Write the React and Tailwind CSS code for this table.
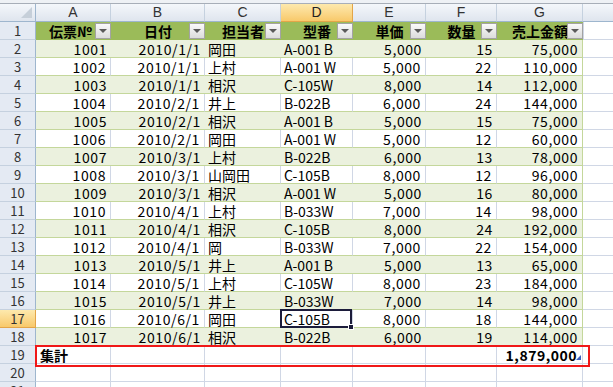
import React from "react";

const cols = [
  { key: "A", w: "w-[75px]" },
  { key: "B", w: "w-[94px]" },
  { key: "C", w: "w-[76px]" },
  { key: "D", w: "w-[72px]" },
  { key: "E", w: "w-[73px]" },
  { key: "F", w: "w-[71px]" },
  { key: "G", w: "w-[86px]" },
];

const heads = ["伝票№", "日付", "担当者", "型番", "単価", "数量", "売上金額"];

const rows = [
  ["1001", "2010/1/1", "岡田", "A-001 B", "5,000", "15", "75,000"],
  ["1002", "2010/1/1", "上村", "A-001 W", "5,000", "22", "110,000"],
  ["1003", "2010/1/1", "相沢", "C-105W", "8,000", "14", "112,000"],
  ["1004", "2010/2/1", "井上", "B-022B", "6,000", "24", "144,000"],
  ["1005", "2010/2/1", "相沢", "A-001 B", "5,000", "15", "75,000"],
  ["1006", "2010/2/1", "岡田", "A-001 W", "5,000", "12", "60,000"],
  ["1007", "2010/3/1", "上村", "B-022B", "6,000", "13", "78,000"],
  ["1008", "2010/3/1", "山岡田", "C-105B", "8,000", "12", "96,000"],
  ["1009", "2010/3/1", "相沢", "A-001 W", "5,000", "16", "80,000"],
  ["1010", "2010/4/1", "上村", "B-033W", "7,000", "14", "98,000"],
  ["1011", "2010/4/1", "相沢", "C-105B", "8,000", "24", "192,000"],
  ["1012", "2010/4/1", "岡", "B-033W", "7,000", "22", "154,000"],
  ["1013", "2010/5/1", "井上", "A-001 B", "5,000", "13", "65,000"],
  ["1014", "2010/5/1", "上村", "C-105W", "8,000", "23", "184,000"],
  ["1015", "2010/5/1", "井上", "B-033W", "7,000", "14", "98,000"],
  ["1016", "2010/6/1", "岡田", "C-105B", "8,000", "18", "144,000"],
  ["1017", "2010/6/1", "相沢", "B-022B", "6,000", "19", "114,000"],
];

const leftCols = [2, 3];

function RowHead({ n, active }) {
  return (
    <div
      className={
        "w-[36px] shrink-0 h-full flex items-center justify-center border-r border-b text-[13px] " +
        (active
          ? "bg-gradient-to-b from-[#fde9ad] to-[#f8c96a] border-r-[#e3a548] border-b-[#e3a548] text-[#333]"
          : "bg-[#e4eaf3] border-r-[#9eb6ce] border-b-[#c5d1df] text-[#333]")
      }
    >
      {n}
    </div>
  );
}

function FilterBtn() {
  return (
    <div className="absolute right-0 top-[1px] w-[16px] h-[16px] border border-[#a3a3a3] bg-gradient-to-b from-[#fafafa] to-[#dcdcdc] flex items-center justify-center">
      <div className="w-0 h-0 border-l-[4px] border-r-[4px] border-t-[4px] border-l-transparent border-r-transparent border-t-[#5a5a5a]" />
    </div>
  );
}

export default function App() {
  return (
    <div
      className="w-[613px] h-[387px] overflow-hidden bg-white relative"
      style={{ fontFamily: '"Noto Sans CJK JP", "Liberation Sans", sans-serif' }}
    >
      <div className="h-[4px] bg-[#eef1f5] border-b border-[#a7aeb8]" />

      {/* column letters */}
      <div className="flex h-[18px]" style={{ fontFamily: '"Liberation Sans", sans-serif' }}>
        <div className="w-[36px] shrink-0 bg-gradient-to-b from-[#f4f7fb] to-[#dfe5ee] border-r border-b border-[#9eb6ce] relative">
          <div className="absolute right-[3px] bottom-[3px] w-0 h-0 border-l-[11px] border-b-[11px] border-l-transparent border-b-[#c6cfd9]" />
        </div>
        {cols.map((c) => (
          <div
            key={c.key}
            className={
              c.w +
              " shrink-0 flex items-center justify-center border-r border-b text-[14px] " +
              (c.key === "D"
                ? "bg-gradient-to-b from-[#fde9ad] to-[#f8c96a] border-[#e3a548] text-[#222]"
                : "bg-gradient-to-b from-[#f4f7fb] to-[#dfe5ee] border-r-[#c5d1df] border-b-[#9eb6ce] text-[#333]")
            }
          >
            {c.key}
          </div>
        ))}
        <div className="flex-1 bg-gradient-to-b from-[#f4f7fb] to-[#dfe5ee] border-b border-[#9eb6ce]" />
      </div>

      {/* row 1: table header */}
      <div className="flex h-[18px]">
        <RowHead n={1} />
        {cols.map((c, i) => (
          <div
            key={c.key}
            className={c.w + " shrink-0 relative bg-[#9bbb59] border-b border-[#9bbb59] flex items-center justify-center text-[14px] font-bold text-black leading-[18px] overflow-hidden whitespace-nowrap"}
          >
            <span className={i === 0 ? "pr-[6px]" : ""}>{heads[i]}</span>
            <FilterBtn />
          </div>
        ))}
        <div className="flex-1 border-b border-l border-[#d0d7e5]" />
      </div>

      {/* data rows */}
      {rows.map((r, ri) => {
        const band = ri % 2 === 0;
        const n = ri + 2;
        return (
          <div key={ri} className="flex h-[18px]">
            <RowHead n={n} active={n === 17} />
            {cols.map((c, ci) => (
              <div
                key={c.key}
                className={
                  c.w +
                  " shrink-0 relative border-b border-b-[#c4d79b] flex items-center text-[14px] leading-[18px] text-black whitespace-nowrap " +
                  (leftCols.includes(ci) ? "justify-start pl-[3px] " : "justify-end pr-[4px] tracking-[0.6px] ") +
                  (band
                    ? "bg-[#ebf1de] " + (ci === 6 ? "border-r border-r-[#c4d79b]" : "")
                    : "bg-white border-r " + (ci === 6 ? "border-r-[#c4d79b]" : "border-r-[#d0d7e5]"))
                }
              >
                {r[ci]}
                {n === 17 && ci === 3 && (
                  <div className="absolute z-10 left-[-1px] top-[-1px] right-0 bottom-[-1px] border-2 border-[#1c1c3b]">
                    <div className="absolute right-[-4px] bottom-[-4px] w-[6px] h-[6px] bg-[#1c1c3b] border border-white" />
                  </div>
                )}
              </div>
            ))}
            <div className="flex-1 border-b border-[#d0d7e5]" />
          </div>
        );
      })}

      {/* row 19: total */}
      <div className="flex h-[18px]">
        <RowHead n={19} />
        {cols.map((c, ci) => (
          <div
            key={c.key}
            className={
              c.w +
              " shrink-0 relative bg-white border-b border-r border-[#d0d7e5] flex items-center text-[14px] leading-[18px] font-bold text-black whitespace-nowrap " +
              (ci === 0 ? "justify-start pl-[4px]" : "justify-end pr-[5px] tracking-[0.5px]")
            }
          >
            {ci === 0 && "集計"}
            {ci === 6 && "1,879,000"}
            {ci === 6 && (
              <div className="absolute right-[1px] bottom-[3px] w-0 h-0 border-l-[5px] border-b-[5px] border-l-transparent border-b-[#3c5fbf]" />
            )}
          </div>
        ))}
        <div className="flex-1 border-b border-[#d0d7e5]" />
      </div>

      {[20, 21].map((n) => (
        <div key={n} className="flex h-[18px]">
          <RowHead n={n} />
          {cols.map((c) => (
            <div key={c.key} className={c.w + " shrink-0 border-b border-r border-[#d0d7e5]"} />
          ))}
          <div className="flex-1 border-b border-[#d0d7e5]" />
        </div>
      ))}

      {/* red marker around total row */}
      <div className="absolute left-[35px] top-[345px] w-[555px] h-[22px] border-2 border-[#f01818] pointer-events-none" />
    </div>
  );
}
